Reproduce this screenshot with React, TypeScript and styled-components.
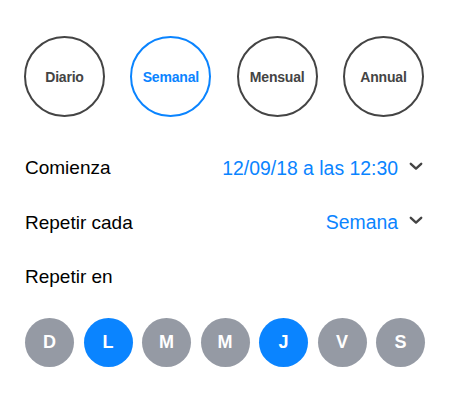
import React from 'react';
import styled, { createGlobalStyle } from 'styled-components';

const BLUE = '#0a84ff';
const DARK = '#444444';
const GRAY = '#959aa4';

const GlobalStyle = createGlobalStyle`
  html, body {
    margin: 0;
    padding: 0;
    background: #ffffff;
  }
  body {
    font-family: "Liberation Sans", Arial, Helvetica, sans-serif;
    -webkit-font-smoothing: antialiased;
  }
`;

const frequencies = ['Diario', 'Semanal', 'Mensual', 'Annual'];
const days = [
  { label: 'D', active: false },
  { label: 'L', active: true },
  { label: 'M', active: false },
  { label: 'M', active: false },
  { label: 'J', active: true },
  { label: 'V', active: false },
  { label: 'S', active: false },
];

const Chevron: React.FC = () => (
  <ChevronIcon width="14" height="9" viewBox="0 0 14 9">
    <path
      d="M1.8 1.8 L7 6.6 L12.2 1.8"
      fill="none"
      stroke={DARK}
      strokeWidth="2.4"
      strokeLinecap="round"
      strokeLinejoin="round"
    />
  </ChevronIcon>
);

const App: React.FC = () => {
  return (
    <Page>
      <GlobalStyle />
      <FrequencyRow>
        {frequencies.map((f) => (
          <FrequencyButton key={f} $active={f === 'Semanal'}>
            {f}
          </FrequencyButton>
        ))}
      </FrequencyRow>

      <SettingRow>
        <Label>Comienza</Label>
        <Value>
          <ValueText>12/09/18 a las 12:30</ValueText>
          <Chevron />
        </Value>
      </SettingRow>

      <SettingRow>
        <Label>Repetir cada</Label>
        <Value>
          <ValueText>Semana</ValueText>
          <Chevron />
        </Value>
      </SettingRow>

      <SettingRow>
        <Label>Repetir en</Label>
      </SettingRow>

      <DayRow>
        {days.map((d, i) => (
          <DayButton key={i} $active={d.active}>
            {d.label}
          </DayButton>
        ))}
      </DayRow>
    </Page>
  );
};

const Page = styled.div`
  width: 450px;
  height: 415px;
  box-sizing: border-box;
  padding: 36px 25px 0 24px;
  display: flex;
  flex-direction: column;
`;

const FrequencyRow = styled.div`
  display: flex;
  justify-content: space-between;
  padding-right: 1px;
  margin-bottom: 24px;
`;

const FrequencyButton = styled.div<{ $active: boolean }>`
  width: 81px;
  height: 81px;
  box-sizing: border-box;
  border-radius: 50%;
  border: 2.5px solid ${(p) => (p.$active ? BLUE : DARK)};
  color: ${(p) => (p.$active ? BLUE : DARK)};
  display: flex;
  align-items: center;
  justify-content: center;
  font-size: 14px;
  font-weight: 700;
  letter-spacing: -0.2px;
`;

const SettingRow = styled.div`
  height: 54.5px;
  display: flex;
  align-items: center;
  justify-content: space-between;
`;

const Label = styled.span`
  font-size: 19px;
  color: #000000;
  padding-left: 1px;
`;

const Value = styled.div`
  display: flex;
  align-items: center;
  gap: 11px;
  padding-right: 2px;
`;

const ValueText = styled.span`
  font-size: 19.4px;
  color: ${BLUE};
`;

const ChevronIcon = styled.svg`
  display: block;
  margin-top: -4px;
`;

const DayRow = styled.div`
  margin-top: 13px;
  display: flex;
  justify-content: space-between;
  padding-left: 1px;
`;

const DayButton = styled.div<{ $active: boolean }>`
  width: 49px;
  height: 49px;
  border-radius: 50%;
  background: ${(p) => (p.$active ? BLUE : GRAY)};
  color: #ffffff;
  display: flex;
  align-items: center;
  justify-content: center;
  font-size: 18px;
  font-weight: 700;
`;

export default App;
